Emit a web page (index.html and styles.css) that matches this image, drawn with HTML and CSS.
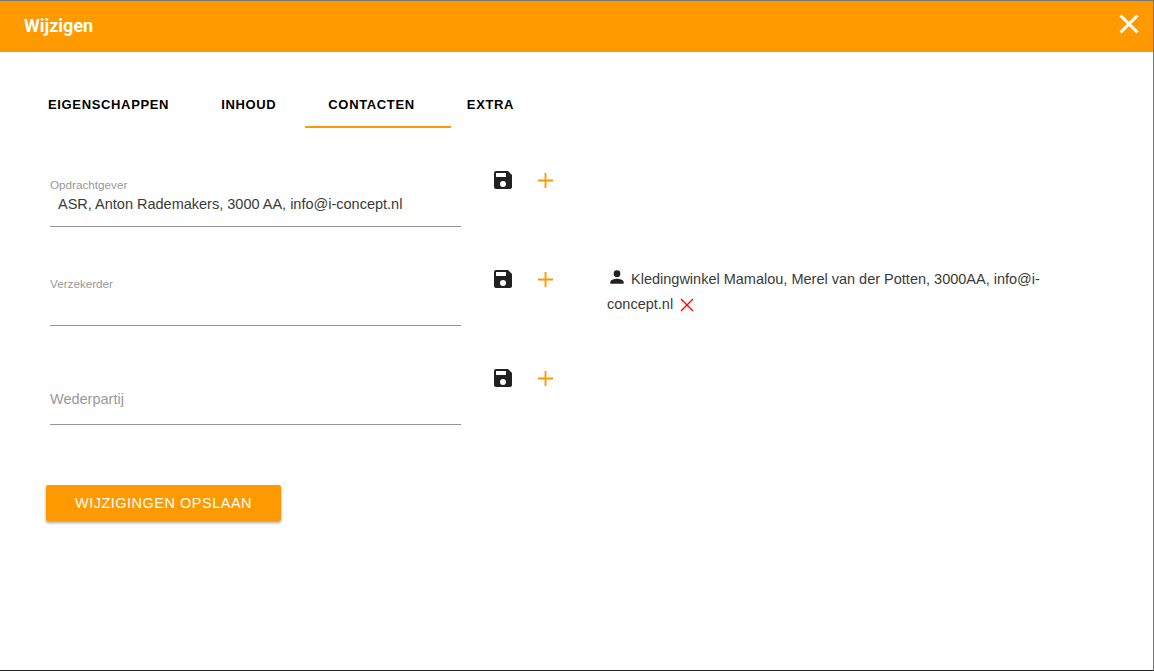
FILE: index.html
```html
<!doctype html>
<html>
<head>
    <meta charset="utf-8">
    <title>Wijzigen</title>
    <link rel="stylesheet" href="styles.css">
</head>
<body>
<div class="dialog">
    <header class="dialog-header">
        <h1 class="dialog-title">Wijzigen</h1>
        <button class="dialog-close" aria-label="Sluiten">
            <svg width="24" height="24" viewBox="0 0 24 24"><path d="M3.500 3.500l17 17M20.500 3.500l-17 17" fill="none" stroke="#fff" stroke-width="3"/></svg>
        </button>
    </header>

    <nav class="tabs">
        <a class="tab">Eigenschappen</a>
        <a class="tab">Inhoud</a>
        <a class="tab tab-active">Contacten</a>
        <a class="tab">Extra</a>
    </nav>

    <form class="contacts">
        <div class="contact-row">
            <div class="field">
                <label class="field-label">Opdrachtgever</label>
                <div class="field-value">ASR, Anton Rademakers, 3000 AA, info@i-concept.nl</div>
            </div>
            <div class="row-actions">
                <svg class="icon-save" viewBox="0 0 24 24"><path d="M17 3H5a2 2 0 0 0-2 2v14a2 2 0 0 0 2 2h14a2 2 0 0 0 2-2V7l-4-4zm-5 16a3 3 0 1 1 0-6 3 3 0 0 1 0 6zm3-10H5V5h10v4z"/></svg>
                <svg class="icon-add" viewBox="0 0 16 16"><path d="M8 0v16M0 8h16"/></svg>
            </div>
        </div>

        <div class="contact-row">
            <div class="field">
                <label class="field-label">Verzekerder</label>
                <div class="field-value"></div>
            </div>
            <div class="row-actions">
                <svg class="icon-save" viewBox="0 0 24 24"><path d="M17 3H5a2 2 0 0 0-2 2v14a2 2 0 0 0 2 2h14a2 2 0 0 0 2-2V7l-4-4zm-5 16a3 3 0 1 1 0-6 3 3 0 0 1 0 6zm3-10H5V5h10v4z"/></svg>
                <svg class="icon-add" viewBox="0 0 16 16"><path d="M8 0v16M0 8h16"/></svg>
            </div>
            <p class="linked-contact">
                <svg class="icon-person" viewBox="0 0 24 24"><path d="M12 12a4 4 0 1 0 0-8 4 4 0 0 0 0 8zm0 2c-2.700 0-8 1.300-8 4v2h16v-2c0-2.700-5.300-4-8-4z"/></svg>
                Kledingwinkel Mamalou, Merel van der Potten, 3000AA, info@i-concept.nl
                <svg class="icon-remove" viewBox="0 0 14 14"><path d="M1 1l12 12M13 1L1 13"/></svg>
            </p>
        </div>

        <div class="contact-row">
            <div class="field field-empty">
                <label class="field-label">Wederpartij</label>
            </div>
            <div class="row-actions">
                <svg class="icon-save" viewBox="0 0 24 24"><path d="M17 3H5a2 2 0 0 0-2 2v14a2 2 0 0 0 2 2h14a2 2 0 0 0 2-2V7l-4-4zm-5 16a3 3 0 1 1 0-6 3 3 0 0 1 0 6zm3-10H5V5h10v4z"/></svg>
                <svg class="icon-add" viewBox="0 0 16 16"><path d="M8 0v16M0 8h16"/></svg>
            </div>
        </div>

        <button type="button" class="save-button">Wijzigingen opslaan</button>
    </form>
</div>
</body>
</html>
```

FILE: styles.css
```css
html, body {
    height: 100%;
    margin: 0;
}

body {
    background: #fff;
    font-family: "Liberation Sans", Arial, sans-serif;
    color: #3a3a3a;
}

.dialog {
    height: 100%;
    box-sizing: border-box;
    border-right: 1px solid #777;
    border-bottom: 1px solid #222;
    overflow: hidden;
}

.dialog-header {
    display: flex;
    align-items: center;
    justify-content: space-between;
    box-sizing: border-box;
    height: 52px;
    padding: 0 12px 2px 24px;
    background: #ff9900;
    border-top: 1px solid #777;
}

.dialog-title {
    margin: 0;
    font-family: Roboto, sans-serif;
    font-size: 18px;
    font-weight: 700;
    color: #fff;
}

.dialog-close {
    display: flex;
    margin-bottom: 4px;
    padding: 0;
    border: 0;
    background: none;
}

.tabs {
    position: relative;
    display: flex;
    gap: 4px;
    height: 48px;
    margin-top: 28px;
    padding-left: 24px;
}

.tab {
    padding: 0 24px;
    line-height: 50px;
    font-size: 13px;
    font-weight: 700;
    letter-spacing: 0.65px;
    text-transform: uppercase;
    color: #000;
}

.tab-active::after {
    content: "";
    position: absolute;
    left: 305px;
    bottom: 0;
    width: 146px;
    height: 2px;
    background: #ff9900;
}

.contacts {
    padding: 24px 0 0 46px;
}

.contact-row {
    display: flex;
    align-items: flex-start;
    height: 99px;
}

.field {
    box-sizing: border-box;
    width: 411px;
    height: 75px;
    margin-left: 4px;
    padding-top: 26px;
    border-bottom: 1px solid #949494;
}

.field-label {
    display: block;
    font-size: 11.7px;
    line-height: 14px;
    color: #999;
}

.field-value {
    padding: 1px 0 0 8px;
    font-size: 14.5px;
    line-height: 22px;
}

.field-empty {
    padding-top: 40px;
}

.field-empty .field-label {
    font-size: 14.5px;
    line-height: 18px;
}

.row-actions {
    display: flex;
    align-items: center;
    gap: 23px;
    width: 116px;
    height: 24px;
    margin: 16px 0 0 30px;
}

.icon-save {
    width: 24px;
    height: 24px;
    fill: #212121;
}

.icon-add {
    width: 15px;
    height: 15px;
    fill: none;
    stroke: #ff9900;
    stroke-width: 2;
}

.linked-contact {
    width: 440px;
    margin: 16px 0 0 0;
    font-size: 14.5px;
    line-height: 25px;
}

.icon-person {
    width: 20px;
    height: 20px;
    fill: #212121;
    vertical-align: -3px;
}

.icon-remove {
    width: 14px;
    height: 14px;
    margin-left: 3px;
    fill: none;
    stroke: #f00;
    stroke-width: 1.4;
    vertical-align: -3px;
}

.save-button {
    display: block;
    width: 235px;
    height: 36px;
    margin-top: 36px;
    padding: 0;
    border: 0;
    border-radius: 2px;
    background: #ff9900;
    box-shadow: 0 2px 3px rgba(0, 0, 0, 0.35);
    font-family: "Liberation Sans", Arial, sans-serif;
    font-size: 14.5px;
    letter-spacing: 0.5px;
    text-transform: uppercase;
    color: #fff;
}
```
